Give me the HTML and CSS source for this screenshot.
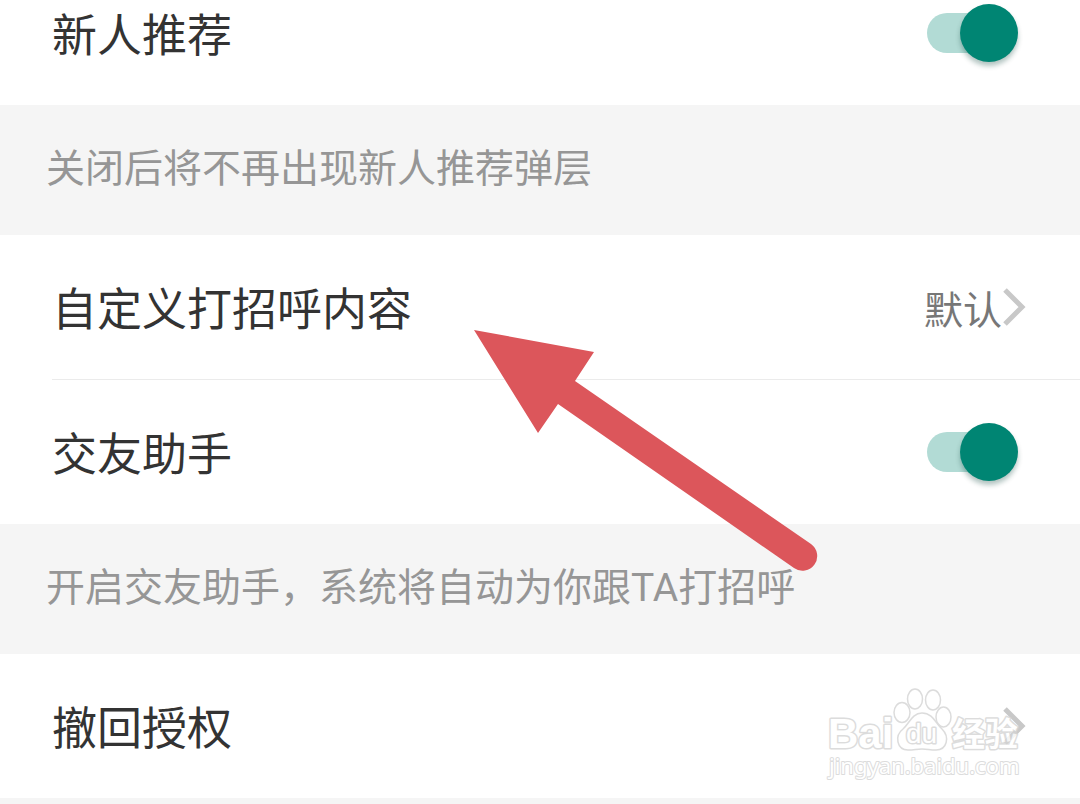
FILE: index.html
```html
<!DOCTYPE html>
<html lang="zh-CN">
<head>
<meta charset="utf-8">
<meta name="viewport" content="width=device-width, initial-scale=1">
<title>设置</title>
<link rel="stylesheet" href="styles.css">
</head>
<body>
<main class="settings">
  <div class="row row-first">
    <label class="row-title" for="newcomer">新人推荐</label>
    <input class="switch" type="checkbox" role="switch" id="newcomer" checked>
  </div>
  <p class="note">关闭后将不再出现新人推荐弹层</p>
  <button class="row row-link" type="button">
    <span class="row-title">自定义打招呼内容</span>
    <span class="row-value">默认</span>
    <svg class="chevron" viewBox="0 0 24 40" aria-hidden="true"><path d="M3 3 20 20 3 37"/></svg>
  </button>
  <div class="row row-divided">
    <label class="row-title" for="assistant">交友助手</label>
    <input class="switch" type="checkbox" role="switch" id="assistant" checked>
  </div>
  <p class="note">开启交友助手，系统将自动为你跟TA打招呼</p>
  <button class="row row-link" type="button">
    <span class="row-title">撤回授权</span>
    <svg class="chevron" viewBox="0 0 24 40" aria-hidden="true"><path d="M3 3 20 20 3 37"/></svg>
  </button>
  <div class="gap"></div>

  <svg class="arrow" viewBox="0 0 344 242" aria-hidden="true">
    <path d="M0 0 120 22 101 51 337 214A14.500 14.500 0 0 1 320 238L84 74 64 103Z"/>
  </svg>

  <svg class="watermark" viewBox="0 0 200 96" role="img" aria-label="Baidu 经验">
    <text class="brand" x="0" y="58">Bai</text>
    <ellipse cx="74" cy="22.500" rx="8" ry="10"/>
    <ellipse cx="87" cy="9" rx="7.500" ry="10"/>
    <ellipse cx="105" cy="10" rx="7.500" ry="10"/>
    <ellipse cx="115.500" cy="27" rx="7.500" ry="10"/>
    <path d="M94 23C84 23 81 34 75 39C66 46 69 60 80 60C86 60 89 59 94 59C99 59 102 60 108 60C119 60 122 47 114 39C108 34 105 23 94 23Z"/>
    <text class="du" x="78" y="53">du</text>
    <text class="cjk" x="124" y="56">经验</text>
    <text class="url" x="1" y="84">jingyan.baidu.com</text>
  </svg>
</main>
</body>
</html>
```
FILE: styles.css
```css
* {
  box-sizing: border-box;
}

body {
  margin: 0;
  background: #fff;
  color: #333;
  font-family: "Noto Sans CJK SC", sans-serif;
}

.settings {
  position: relative;
  overflow: hidden;
}

.row {
  display: flex;
  align-items: center;
  width: 100%;
  min-height: 144px;
  padding: 0 54px 0 52px;
  border: 0;
  background: #fff;
  color: inherit;
  font-family: inherit;
  text-align: left;
}

.row-first {
  min-height: 105px;
  padding-bottom: 39px;
}

.row-divided {
  position: relative;
  min-height: 145px;
}

.row-divided::before {
  content: "";
  position: absolute;
  top: 0;
  left: 52px;
  right: 0;
  height: 1px;
  background: #ebebeb;
}

.row-title {
  flex: 1;
  font-size: 45px;
  line-height: 64px;
}

.row-value {
  color: #777;
  font-size: 39px;
  line-height: 56px;
}

.chevron {
  width: 24px;
  height: 40px;
  fill: none;
  stroke: #c8c8c8;
  stroke-width: 5;
}

.note {
  margin: 0;
  padding: 36px 46px 38px;
  background: #f5f5f5;
  color: #969696;
  font-family: Roboto, "Noto Sans CJK SC", sans-serif;
  font-size: 39px;
  line-height: 56px;
}

.switch {
  appearance: none;
  position: relative;
  width: 91px;
  height: 58px;
  margin: 0 8px 0 0;
}

.switch::before {
  content: "";
  position: absolute;
  inset: 9px 9px 9px 0;
  border-radius: 20px;
  background: #b2dbd5;
}

.switch::after {
  content: "";
  position: absolute;
  top: 0;
  right: 0;
  width: 58px;
  height: 58px;
  border-radius: 50%;
  background: #008573;
  box-shadow: 0 4px 5px rgba(0, 60, 50, 0.3);
}

.gap {
  height: 6px;
  background: #f5f5f5;
}

.arrow {
  position: absolute;
  top: 330px;
  left: 474px;
  width: 344px;
  height: 242px;
  fill: #dc565b;
}

.watermark {
  position: absolute;
  right: 52px;
  bottom: 18px;
  width: 200px;
  height: 96px;
  overflow: visible;
  fill: #fff;
  stroke: #d4d4d4;
  stroke-width: 1.5;
  stroke-linejoin: round;
  opacity: 0.8;
}

.watermark text {
  paint-order: stroke;
  stroke-width: 3;
}

.watermark .brand {
  font: bold 42px "Liberation Sans", sans-serif;
}

.watermark .du {
  font: 28px "Liberation Sans", sans-serif;
}

.watermark .cjk {
  font: bold 33px "Noto Sans CJK SC", sans-serif;
}

.watermark .url {
  font: 22px "Noto Sans", sans-serif;
  stroke-width: 2;
}
```
